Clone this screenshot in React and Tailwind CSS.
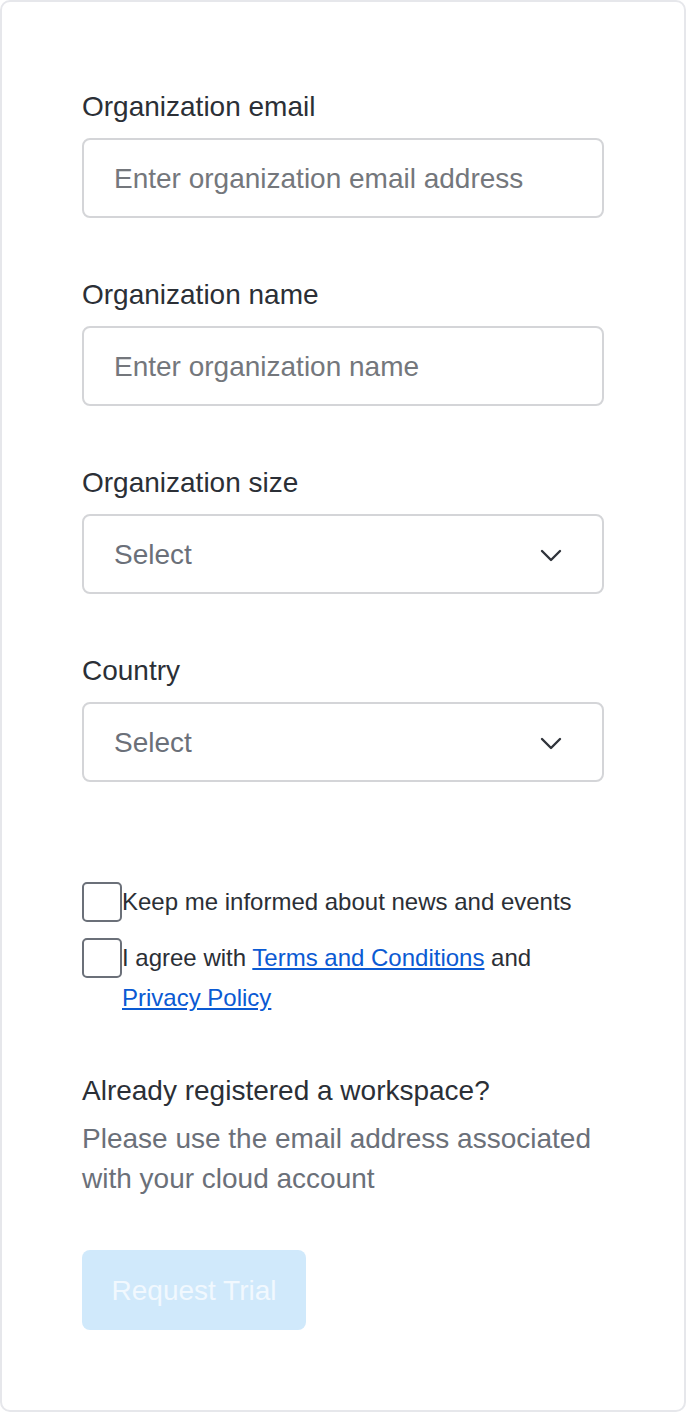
const font = { fontFamily: '"Liberation Sans", Arial, sans-serif' };

const Chevron = () => (
  <svg width="22" height="13" viewBox="0 0 22 13" fill="none" className="shrink-0">
    <path d="M2 2 L11 11 L20 2" stroke="#30343b" strokeWidth="2.4" strokeLinecap="round" strokeLinejoin="round" />
  </svg>
);

const Field = ({ label, children }) => (
  <div className="flex flex-col">
    <label className="pt-px text-[28px] leading-[40px] text-[#2b2f36]">{label}</label>
    <div className="mt-[11px]">{children}</div>
  </div>
);

const TextInput = ({ placeholder }) => (
  <input
    type="text"
    placeholder={placeholder}
    className="h-20 w-full rounded-lg border-2 border-[#d4d5d8] bg-white px-[30px] pt-[2px] text-[28px] text-[#2b2f36] outline-none placeholder:text-[#74777c]"
    style={font}
  />
);

const SelectBox = () => (
  <button
    type="button"
    className="flex h-20 w-full items-center justify-between rounded-lg border-2 border-[#d4d5d8] bg-white pl-[30px] pr-[40px] pt-[2px] text-left text-[28px] text-[#6b7079]"
    style={font}
  >
    <span>Select</span>
    <Chevron />
  </button>
);

const Checkbox = () => (
  <span className="block h-10 w-10 shrink-0 rounded-[5px] border-2 border-[#6b7079] bg-white" />
);

export default function App() {
  return (
    <div className="bg-white" style={font}>
      <div className="flex h-[1412px] w-[686px] flex-col rounded-[10px] border-2 border-[#e6e7eb] bg-white px-20 pt-[84px]">
        <div className="flex flex-col gap-14">
          <Field label="Organization email">
            <TextInput placeholder="Enter organization email address" />
          </Field>
          <Field label="Organization name">
            <TextInput placeholder="Enter organization name" />
          </Field>
          <Field label="Organization size">
            <SelectBox />
          </Field>
          <Field label="Country">
            <SelectBox />
          </Field>
        </div>

        <div className="mt-[100px] flex flex-col gap-4">
          <div className="flex items-start">
            <Checkbox />
            <span className="text-[24px] leading-[40px] text-[#2b2f36]">Keep me informed about news and events</span>
          </div>
          <div className="flex items-start">
            <Checkbox />
            <span className="text-[24px] leading-[40px] text-[#2b2f36]">
              I agree with{' '}
              <a href="#" className="text-[#0b5ad3] underline">Terms and Conditions</a> and{' '}
              <a href="#" className="text-[#0b5ad3] underline">Privacy Policy</a>
            </span>
          </div>
        </div>

        <div className="mt-[52px]">
          <p className="pt-px text-[28px] leading-[40px] text-[#2b2f36]">Already registered a workspace?</p>
          <p className="mt-[7px] pt-px text-[28px] leading-[40px] text-[#6b7079]">
            Please use the email address associated with your cloud account
          </p>
        </div>

        <div className="mt-[51px]">
          <button
            type="button"
            disabled
            className="h-20 w-[224px] rounded-lg bg-[#d0e9fb] pt-[2px] text-[28px] text-[#f1f8fe]"
            style={font}
          >
            Request Trial
          </button>
        </div>
      </div>
    </div>
  );
}
